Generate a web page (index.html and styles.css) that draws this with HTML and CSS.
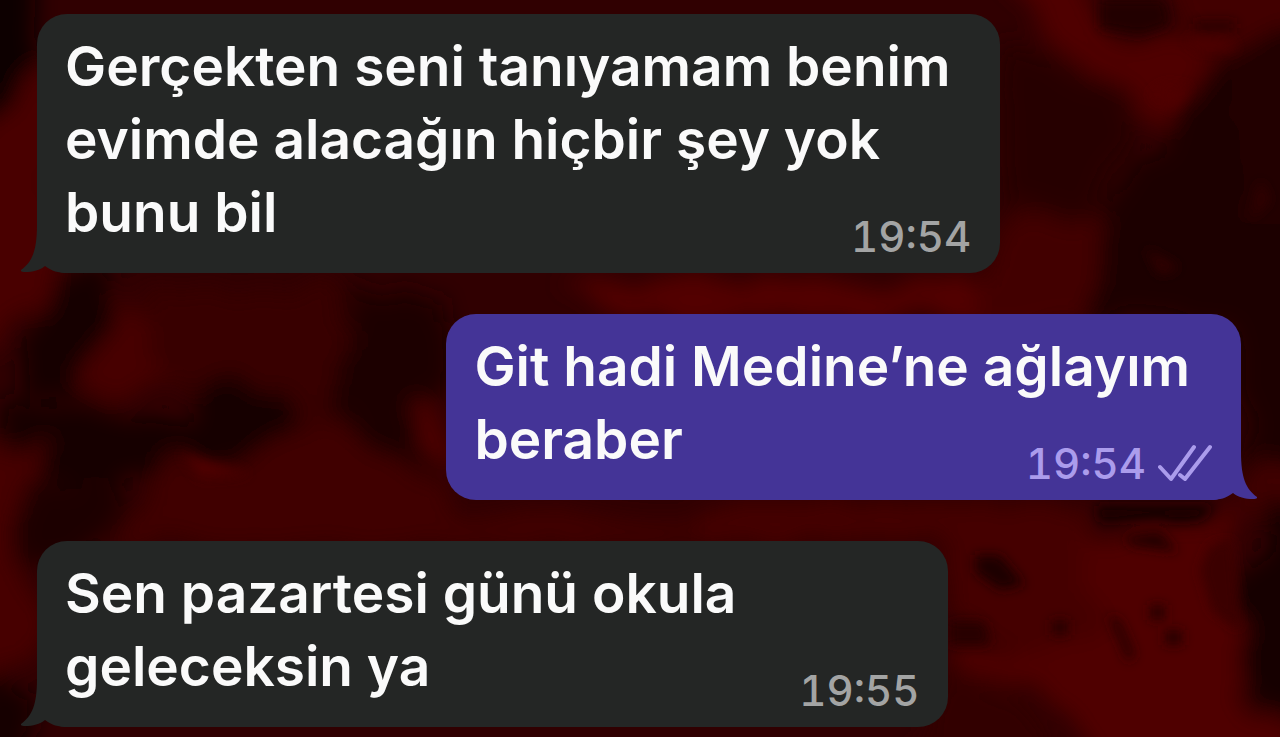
FILE: index.html
```html
<!DOCTYPE html>
<html lang="tr">
<head>
<meta charset="utf-8">
<meta name="viewport" content="width=device-width, initial-scale=1">
<title>Sohbet</title>
<link rel="stylesheet" href="styles.css">
</head>
<body>
<svg class="wallpaper" viewBox="0 0 1280 737" preserveAspectRatio="none" aria-hidden="true">
  <defs>
    <filter id="soft" x="-10%" y="-10%" width="120%" height="120%">
      <feTurbulence type="fractalNoise" baseFrequency="0.02" numOctaves="3" seed="4" result="noise"/>
      <feDisplacementMap in="SourceGraphic" in2="noise" scale="40" xChannelSelector="R" yChannelSelector="G"/>
      <feGaussianBlur stdDeviation="11"/>
    </filter>
    <filter id="fine" x="-10%" y="-10%" width="120%" height="120%"><feGaussianBlur stdDeviation="6"/></filter>
  </defs>
  <rect width="1280" height="737" fill="#300001"/>
  <g filter="url(#soft)">
    <path fill="#480002" d="M20 70L60 60V300L42 322L15 310L0 350L-30 350V150Z"/>
    <path fill="#100000" d="M-40-40H40L32 60L18 110L-40 150Z"/>
    <path fill="#130001" d="M70 272H118L98 345L66 400L20 396L28 330Z"/>
    <path fill="#460002" d="M118 290L145 325L165 370L120 400L72 385L90 355Z"/>
    <path fill="#380001" d="M145 285L330 290L360 350L320 440L290 390L200 410L150 370Z"/>
    <path fill="#180001" d="M200 385L290 395L310 440L220 462L120 480L30 470L0 430L0 400L100 415L190 420Z"/>
    <path fill="#1e0001" d="M350 290L450 300V395L410 420L440 480L380 450L320 410L350 350Z"/>
    <path fill="#520002" d="M412 400L450 420V485L425 450Z"/>
    <path fill="#460002" d="M-40 448L48 445L22 490L12 560L40 600V660L-40 680Z"/>
    <path fill="#400002" d="M160 452L230 468L320 425L370 440L460 510L700 515V545H100L150 500Z"/>
    <path fill="#1d0001" d="M28 480L120 475L130 505L80 560H20Z"/>
    <path fill="#130001" d="M-30 675L35 690L25 780H-30Z"/>
    <path fill="#520002" d="M560 280H1010L1090 320H620Z"/>
    <path fill="#500002" d="M1000-40L1085-40L1095 35L1180 40L1220 55L1165 130L1110 80L1040 35Z"/>
    <path fill="#420002" d="M1160-40H1320V20L1225 55L1170 20Z"/>
    <path fill="#280001" d="M1000 40L1120 90L1140 140L1090 210L1000 210Z"/>
    <path fill="#430002" d="M1000 225L1110 210L1090 315H980Z"/>
    <path fill="#1a0001" d="M1320 20L1215 60L1170 130L1110 205L1085 320H1210L1235 345L1245 480L1320 520Z"/>
    <path fill="#240001" d="M1230 70L1320 60V230L1240 210Z"/>
    <path fill="#420002" d="M1235 475L1270 460L1320 475V520L1250 520Z"/>
    <path fill="#440002" d="M700 503H1090L1110 640L1020 660L950 610V540H700Z"/>
    <path fill="#500002" d="M1080 540L1120 530L1205 515L1230 500L1240 610L1235 700L1320 740V780H1110L1040 690L950 660V640L1020 660L1100 630Z"/>
    <path fill="#180001" d="M1275 490L1320 520V725L1250 700L1232 660L1238 630L1225 615L1250 580Z"/>
    <path fill="#300001" d="M950 660L1020 700L1070 780H900Z"/>
  </g>
  <g filter="url(#fine)">
    <path fill="#180001" d="M1095 506H1215L1200 520L1175 522L1160 518L1100 522Z"/>
    <path fill="#240001" d="M1125 536L1160 532L1178 552L1130 545Z"/>
    <path fill="#1e0001" d="M975 555L1000 555L1025 585L1000 590L975 572Z"/>
    <path fill="#280001" d="M950 622H985L990 645L950 645ZM1108 615L1120 620L1135 655L1128 662ZM1150 605H1165V620H1150ZM1165 630H1182V645H1165ZM1052 620H1068V635H1052Z"/>
    <path fill="#3a0001" d="M1210 545L1200 570L1212 610L1240 630L1232 540Z"/>
    <path fill="#200001" d="M1100 0H1165L1170 25L1140 35L1100 28ZM1195 22H1235V30H1195Z"/>
    <path fill="#500002" d="M1165 85L1190 88L1175 110L1150 95ZM1185 38L1230 42L1238 50L1200 50ZM180 452L225 466L250 474L200 478Z"/>
    <path fill="#300001" d="M1260 180L1270 200L1250 220ZM1145 248L1180 268L1160 275Z"/>
  </g>
</svg>
<main class="chat">
  <article class="bubble received long">
    <p class="text">Gerçekten seni tanıyamam benim evimde alacağın hiçbir şey yok bunu bil
      <span class="meta"><time datetime="19:54">19:54</time></span></p>
    <svg class="tail" viewBox="0 0 46 48" aria-hidden="true"><path d="M16 0C16 26 11 37 0 45C-1 46 1 47 4 47C12 47 19 45 24 41C31 46 37 48 46 48V0Z"/></svg>
  </article>
  <article class="bubble sent">
    <p class="text">Git hadi Medine’ne ağlayım beraber
      <span class="meta"><time datetime="19:54">19:54</time>
        <svg class="checks" viewBox="0 0 54 40" role="img" aria-label="İletildi"><path d="M2 23L13 35L36 3M22 31L27 35L52 3"/></svg></span></p>
    <svg class="tail" viewBox="0 0 46 48" aria-hidden="true"><path d="M16 0C16 26 11 37 0 45C-1 46 1 47 4 47C12 47 19 45 24 41C31 46 37 48 46 48V0Z"/></svg>
  </article>
  <article class="bubble received short">
    <p class="text">Sen pazartesi günü okula geleceksin ya
      <span class="meta"><time datetime="19:55">19:55</time></span></p>
    <svg class="tail" viewBox="0 0 46 48" aria-hidden="true"><path d="M16 0C16 26 11 37 0 45C-1 46 1 47 4 47C12 47 19 45 24 41C31 46 37 48 46 48V0Z"/></svg>
  </article>
</main>
</body>
</html>
```
FILE: styles.css
```css
* {
  box-sizing: border-box;
}

body {
  margin: 0;
  min-height: 100vh;
  background: #300001;
  font-family: Inter, "Noto Sans", sans-serif;
}

.wallpaper {
  position: fixed;
  inset: 0;
  width: 100%;
  height: 100%;
}

.chat {
  position: relative;
  display: flex;
  flex-direction: column;
  gap: 41px;
  padding: 14px 39px 8px 37px;
}

.bubble {
  position: relative;
  padding: 16px 29px 16px 28px;
  border-radius: 30px;
  color: #fafafa;
}

.received {
  align-self: flex-start;
  background: #242625;
  --bubble: #242625;
  --meta: #a3a4a4;
}

.sent {
  align-self: flex-end;
  width: 66%;
  background: #443497;
  --bubble: #443497;
  --meta: #ab9cec;
}

.long {
  width: 80%;
}

.short {
  width: 75.7%;
}

.text {
  display: flow-root;
  margin: 0;
  font-size: 55px;
  font-weight: 600;
  line-height: 73px;
}

/* The time floats beside the last line and sits a little below it. */
.meta {
  float: right;
  display: flex;
  align-items: center;
  gap: 12px;
  margin-top: 41px;
  color: var(--meta);
  font-size: 42px;
  font-weight: 500;
  font-variant-numeric: tabular-nums;
  line-height: 40px;
}

.checks {
  width: 54px;
  height: 40px;
  fill: none;
  stroke: currentColor;
  stroke-width: 4;
  stroke-linecap: round;
  stroke-linejoin: round;
}

.tail {
  position: absolute;
  bottom: 0;
  left: -16px;
  width: 46px;
  height: 48px;
  fill: var(--bubble);
}

.sent .tail {
  right: -16px;
  left: auto;
  transform: scaleX(-1);
}
```
